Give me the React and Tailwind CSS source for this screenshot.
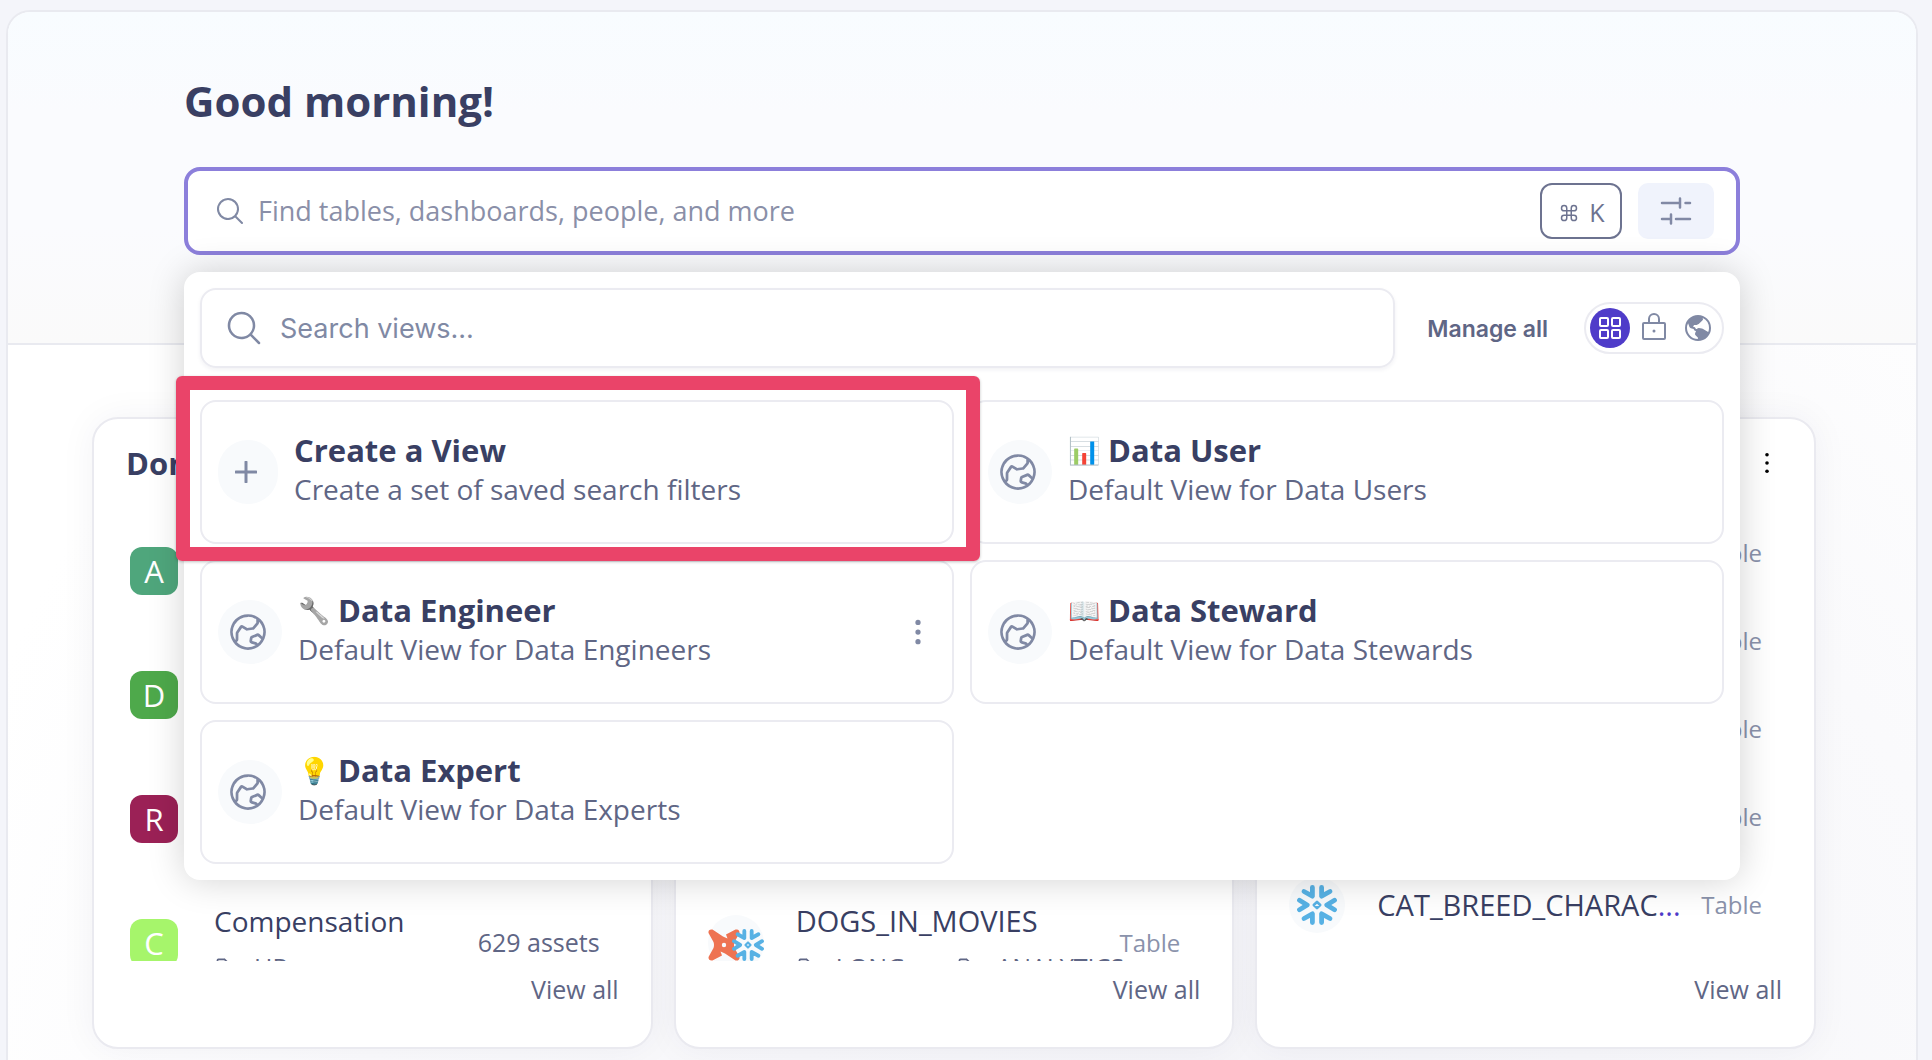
import {
  PiCommand,
  PiFolder,
  PiGlobeHemisphereEast,
  PiGlobeHemisphereWestFill,
  PiLock,
  PiMagnifyingGlass,
  PiSquaresFour,
} from "react-icons/pi";

const VIEWS = [
  { emoji: "📊", title: "Data User", text: "Default View for Data Users" },
  { emoji: "🔧", title: "Data Engineer", text: "Default View for Data Engineers", menu: true, emojiClass: "grayscale" },
  { emoji: "📖", title: "Data Steward", text: "Default View for Data Stewards" },
  { emoji: "💡", title: "Data Expert", text: "Default View for Data Experts" },
];

const DOMAINS = [
  { letter: "A", color: "bg-[#4fa67c]" },
  { letter: "D", color: "bg-[#4ea94b]" },
  { letter: "R", color: "bg-[#9b2156]" },
  { letter: "C", color: "bg-[#a6f56b]", name: "Compensation", parent: "HR", count: "629 assets" },
];

function SlidersIcon() {
  return (
    <svg width="32" height="28" viewBox="0 0 32 28" fill="none" stroke="currentColor" strokeWidth="2.5" strokeLinecap="round">
      <path d="M2 6h18M20 1.500v9M25.500 6H30M2 22h9M11 17.500v9M16 22h14" />
    </svg>
  );
}

function PlusIcon() {
  return (
    <svg width="22" height="22" viewBox="0 0 22 22" fill="none" stroke="currentColor" strokeWidth="3" strokeLinecap="round">
      <path d="M11 1v20M1 11h20" />
    </svg>
  );
}

function SnowflakeLogo({ size, className = "" }) {
  return (
    <svg
      className={`shrink-0 text-[#57b1e4] ${className}`}
      width={size}
      height={size}
      viewBox="0 0 40 40"
      fill="none"
      stroke="currentColor"
      strokeWidth="4.800"
      strokeLinecap="round"
      strokeLinejoin="round"
    >
      <path d="M7 6.500l8.400 4.700V2.400M33 6.500l-8.400 4.700V2.400M7 33.500l8.400-4.700v8.800M33 33.500l-8.400-4.700v8.800" />
      <path d="M2.500 15.200L10.200 20l-7.700 4.800M37.500 15.200L29.800 20l7.700 4.800" />
      <path d="M20 16.800l3.200 3.200-3.200 3.200-3.200-3.200z" strokeWidth="2.600" />
    </svg>
  );
}

function DbtLogo() {
  return (
    <svg className="shrink-0 text-[#ee7352]" width="32" height="32" viewBox="0 0 32 32" fill="currentColor">
      <path
        fillRule="evenodd"
        d="M4.500.6 15 7.500l4.500 2-1.500-4L27.500.6Q31.500-.5 31.500 4L26.500 13q-1 3 0 6l5 9q.5 4-4 3.500L17 24.500l-4.500-2 1.500 4-9.500 5Q.3 32 .5 28l5-9q1-3 0-6L.5 4Q.1-.1 4.500.6zM16 13.800a2.200 2.200 0 1 0 0 4.400 2.200 2.200 0 0 0 0-4.400z"
      />
    </svg>
  );
}

function Dots({ className, radius = 3 }) {
  return (
    <svg className={className} viewBox="0 0 8 32" fill="currentColor" aria-hidden="true">
      <circle cx="4" cy="5" r={radius} />
      <circle cx="4" cy="16" r={radius} />
      <circle cx="4" cy="27" r={radius} />
    </svg>
  );
}

function ViewCard({ icon, narrow, title, text, emoji, emojiClass = "", menu, children }) {
  return (
    <div className="relative flex h-36 items-center gap-4 rounded-2xl border-2 border-[#ebebf1] bg-white px-4">
      <span
        className={`flex h-16 shrink-0 items-center justify-center rounded-full bg-[#f8fafc] pr-1 text-[#8089a4] ${narrow ? "w-15" : "w-16"}`}
      >
        {icon}
      </span>
      <div className="min-w-0 flex-1 pb-[6px]">
        <h3 className="flex items-center gap-2 text-[31px] leading-10 font-bold whitespace-nowrap text-[#393f63]">
          {emoji && <span className={`text-[26px] leading-10 ${emojiClass}`}>{emoji}</span>}
          {title}
        </h3>
        <p className="text-[28px] leading-[38px] whitespace-nowrap text-[#5f6685]">{text}</p>
      </div>
      {menu && (
        <button type="button" aria-label="View options" className="px-[14px] text-[#8089a4]">
          <Dots className="h-7 w-2" />
        </button>
      )}
      {children}
    </div>
  );
}

function ModuleCard({ title, menu, children }) {
  return (
    <section className="rounded-[26px] border-2 border-[#eaeaf0] bg-white shadow-[0_0_36px_rgba(40,30,80,0.05)]">
      <header className="flex h-[90px] items-center justify-between px-8 pb-[2px]">
        <h2 className="text-[31px] leading-10 font-bold text-[#393f63]">{title}</h2>
        {menu && (
          <button type="button" aria-label="Module options" className="px-3 text-black">
            <Dots className="h-6 w-[6px]" radius={2.4} />
          </button>
        )}
      </header>
      <ul className="h-[452px] overflow-hidden">{children}</ul>
      <footer className="flex h-[86px] justify-end px-8 pt-[10px]">
        <a href="#all" className="h-9 text-[25px] leading-9 font-medium text-[#5f6685]">
          View all
        </a>
      </footer>
    </section>
  );
}

function PathPart({ children }) {
  return (
    <span className="flex items-center gap-3">
      <PiFolder size={28} />
      {children}
    </span>
  );
}

export default function App() {
  return (
    <div className="min-h-screen bg-[#f4f5fa] pt-[10px] pr-[14px] pl-[6px] font-['Open_Sans',sans-serif]">
      <main className="rounded-t-[24px] border-2 border-b-0 border-[#e9eaf0] bg-white bg-[radial-gradient(ellipse_at_62%_115%,#f4f4f8_0%,#fafafc_50%,#ffffff_78%)]">
        <div className="rounded-t-[22px] border-b-2 border-[#e9eaf0] bg-[linear-gradient(#f8fcff,#fafbfe_30%,#fafbfe_65%,#fafafa)] px-[176px] pt-[61px] pb-[88px]">
          <h1 className="text-[42px] leading-14 font-bold text-[#393f63]">Good morning!</h1>

          <div className="relative mt-[38px]">
            <div className="flex h-[88px] items-center rounded-2xl border-4 border-[#8c7fdb] bg-white pr-[22px] pl-[26px]">
              <PiMagnifyingGlass className="shrink-0 text-[#8089a4]" size={32} />
              <input
                type="text"
                aria-label="Search"
                placeholder="Find tables, dashboards, people, and more"
                className="ml-3 min-w-0 flex-1 bg-transparent text-[27px] text-[#393f63] outline-none placeholder:text-[#8a8fa8]"
              />
              <kbd className="flex h-14 w-[82px] items-center justify-center gap-2 rounded-xl border-2 border-[#6d7390] pt-1 font-['Open_Sans',sans-serif] text-[25px] text-[#6d7390]">
                <PiCommand size={24} aria-label="⌘" />
                K
              </kbd>
              <button
                type="button"
                aria-label="Filters"
                className="ml-4 flex h-14 w-19 items-center justify-center rounded-[10px] bg-[#f0f3fc] text-[#8189a5]"
              >
                <SlidersIcon />
              </button>
            </div>

            <div className="absolute inset-x-0 top-[105px] z-10 rounded-2xl bg-white p-4 shadow-[0_0_36px_rgba(0,0,0,0.18)]">
              <div className="flex items-center">
                <div className="flex h-20 flex-1 items-center rounded-2xl border-2 border-[#ebebf1] pl-[22px] shadow-[0_2px_4px_rgba(30,30,80,0.06)]">
                  <PiMagnifyingGlass className="shrink-0 text-[#8089a4]" size={40} />
                  <input
                    type="text"
                    aria-label="Search views"
                    placeholder="Search views..."
                    className="ml-4 min-w-0 flex-1 bg-transparent pt-[2px] font-['Inter',sans-serif] text-[27px] text-[#393f63] outline-none placeholder:text-[#8089a4]"
                  />
                </div>
                <a href="#manage" className="mr-9 ml-8 pt-[2px] font-['Inter',sans-serif] text-[23px] font-semibold text-[#5f6685]">
                  Manage all
                </a>
                <div className="flex h-[52px] w-[140px] items-center justify-between rounded-full border-2 border-[#ebebf1] pr-2 pl-1 text-[#8089a4]">
                  <button
                    type="button"
                    aria-label="All views"
                    className="flex size-10 items-center justify-center rounded-full bg-[#4f3cc9] text-white"
                  >
                    <PiSquaresFour size={32} />
                  </button>
                  <button type="button" aria-label="Private views" className="pr-1">
                    <PiLock size={32} />
                  </button>
                  <button type="button" aria-label="Public views">
                    <PiGlobeHemisphereWestFill size={32} />
                  </button>
                </div>
              </div>

              <div className="mt-8 grid grid-cols-2 gap-4">
                <ViewCard narrow icon={<PlusIcon />} title="Create a View" text="Create a set of saved search filters">
                  <div className="pointer-events-none absolute -top-[26px] -right-[28px] -bottom-[19px] -left-[26px] z-10 rounded-md border-[14px] border-[#ea4469] shadow-[0_1px_3px_rgba(0,0,0,0.25)]" />
                </ViewCard>
                {VIEWS.map((view) => (
                  <ViewCard key={view.title} icon={<PiGlobeHemisphereEast size={44} />} {...view} />
                ))}
              </div>
            </div>
          </div>
        </div>

        <div className="grid grid-cols-3 gap-[21px] pt-18 pr-[100px] pb-3 pl-[84px]">
          <ModuleCard title="Domains">
            {DOMAINS.map((domain) => (
              <li key={domain.letter} className="flex h-31 items-center pr-[51px] pl-9">
                <span
                  className={`flex size-12 shrink-0 items-center justify-center rounded-xl text-[31px] text-white ${domain.color}`}
                >
                  {domain.letter}
                </span>
                {domain.name && (
                  <>
                    <div className="ml-9 flex-1">
                      <p className="text-[28px] leading-10 font-medium text-[#393f63]">{domain.name}</p>
                      <p className="mt-[10px] flex h-[34px] items-center text-[25px] text-[#5f6685]">
                        <PathPart>{domain.parent}</PathPart>
                      </p>
                    </div>
                    <span className="text-[25px] text-[#5f6685]">{domain.count}</span>
                  </>
                )}
              </li>
            ))}
          </ModuleCard>

          <ModuleCard>
            <li className="mt-[372px] flex h-31 items-center pr-[52px] pl-8">
              <span className="flex size-14 shrink-0 items-center justify-center rounded-full bg-[#f8fafc] pt-1">
                <DbtLogo />
                <SnowflakeLogo size={32} className="-ml-2" />
              </span>
              <div className="ml-8 min-w-0 flex-1">
                <p className="text-[29px] leading-10 font-medium text-[#393f63]">DOGS_IN_MOVIES</p>
                <p className="mt-[10px] flex h-[34px] items-center gap-3 text-[25px] whitespace-nowrap text-[#5f6685]">
                  <PathPart>LONG...</PathPart>
                  <span>›</span>
                  <PathPart>ANALYTICS</PathPart>
                </p>
              </div>
              <span className="text-[24px] text-[#8a92ab]">Table</span>
            </li>
          </ModuleCard>

          <ModuleCard menu>
            {[1, 2, 3, 4].map((row) => (
              <li key={row} className="flex h-22 items-center justify-end pr-[52px]">
                <span className="text-[24px] text-[#8a92ab]">Table</span>
              </li>
            ))}
            <li className="flex h-22 items-center pr-[52px] pl-8">
              <span className="flex size-14 shrink-0 items-center justify-center rounded-full bg-[#f8fafc]">
                <SnowflakeLogo size={40} />
              </span>
              <p className="ml-8 min-w-0 flex-1 text-[29px] leading-9 font-medium whitespace-nowrap text-[#393f63]">
                CAT_BREED_CHARAC<a href="#table" className="text-[#4f3cc9]">...</a>
              </p>
              <span className="text-[24px] text-[#8a92ab]">Table</span>
            </li>
          </ModuleCard>
        </div>
      </main>
    </div>
  );
}
